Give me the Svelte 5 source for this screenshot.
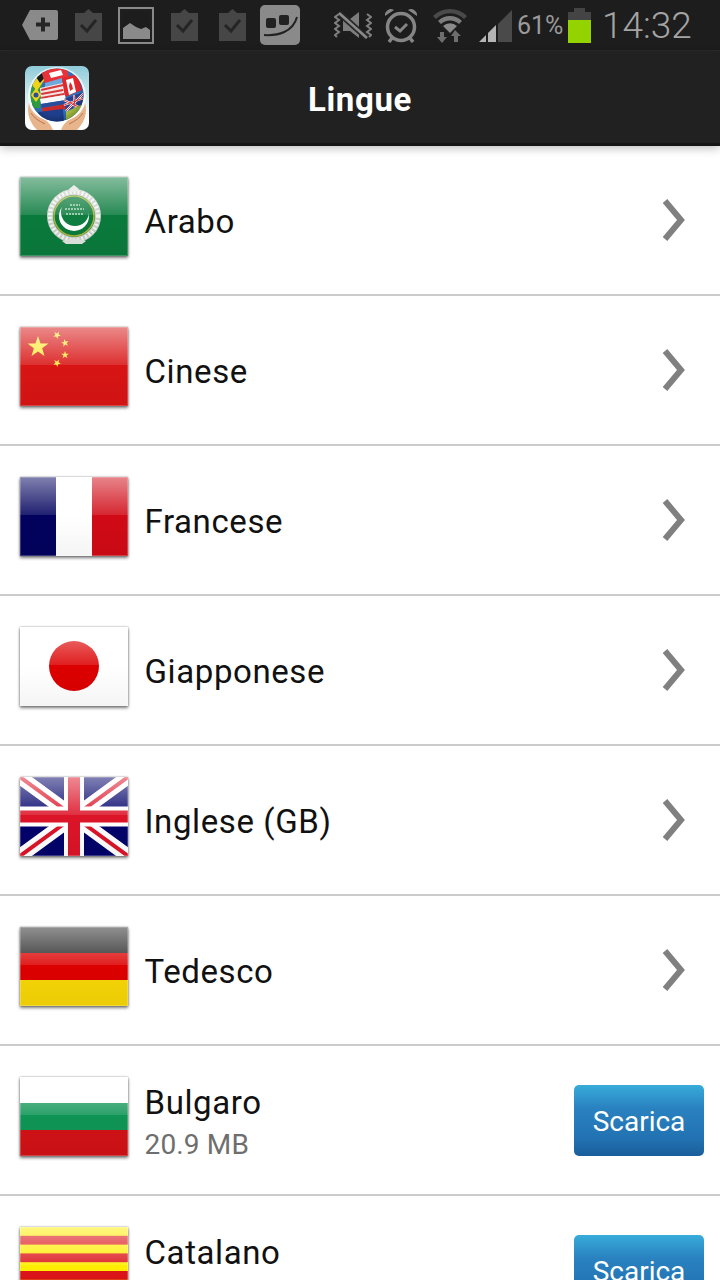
<script>
  const languages = [
    { name: 'Arabo', flag: 'ar' },
    { name: 'Cinese', flag: 'cn' },
    { name: 'Francese', flag: 'fr' },
    { name: 'Giapponese', flag: 'jp' },
    { name: 'Inglese (GB)', flag: 'gb' },
    { name: 'Tedesco', flag: 'de' },
    { name: 'Bulgaro', flag: 'bg', size: '20.9 MB' },
    { name: 'Catalano', flag: 'ca', size: '18.4 MB' }
  ];

  const star = (cx, cy, r, rot = -90) => {
    let pts = [];
    for (let i = 0; i < 10; i++) {
      const rad = i % 2 ? r * 0.4 : r;
      const a = ((rot + i * 36) * Math.PI) / 180;
      pts.push(`${(cx + rad * Math.cos(a)).toFixed(2)},${(cy + rad * Math.sin(a)).toFixed(2)}`);
    }
    return pts.join(' ');
  };

  const catalanRed = [1, 3, 5, 7];
</script>

<div class="screen">
  <div class="status">
    <svg class="i-tag" viewBox="0 0 36 32" width="36" height="32">
      <path d="M8 1h26a2 2 0 0 1 2 2v26a2 2 0 0 1-2 2H8L0 16z" fill="#8a8a8a" />
      <path d="M14 13.500h5v-5h4v5h5v4h-5v5h-4v-5h-5z" fill="#262626" />
    </svg>
    <svg class="i-clip1" viewBox="0 0 27 32" width="27" height="32">
      <path d="M0 4h9l4.500-4 4.500 4h9v28H0z" fill="#464646" />
      <path d="M6 16l6 6 9-11" fill="none" stroke="#252525" stroke-width="3" />
    </svg>
    <svg class="i-pic" viewBox="0 0 36 37" width="36" height="37">
      <rect x="1" y="1" width="34" height="35" fill="none" stroke="#8a8a8a" stroke-width="2" />
      <rect x="3" y="3" width="30" height="31" fill="none" stroke="#222" stroke-width="1" />
      <path d="M5 32V21l7-5 6 4 5 2 5-2 4 3v9z" fill="#8a8a8a" />
    </svg>
    <svg class="i-clip2" viewBox="0 0 27 32" width="27" height="32">
      <path d="M0 4h9l4.500-4 4.500 4h9v28H0z" fill="#464646" />
      <path d="M6 16l6 6 9-11" fill="none" stroke="#252525" stroke-width="3" />
    </svg>
    <svg class="i-clip3" viewBox="0 0 27 32" width="27" height="32">
      <path d="M0 4h9l4.500-4 4.500 4h9v28H0z" fill="#464646" />
      <path d="M6 16l6 6 9-11" fill="none" stroke="#252525" stroke-width="3" />
    </svg>
    <svg class="i-smile" viewBox="0 0 40 40" width="40" height="40">
      <rect width="40" height="40" rx="5" fill="#8a8a8a" />
      <rect x="6" y="13" width="10" height="10" rx="2" fill="#222" />
      <rect x="19" y="10" width="10" height="10" rx="2" fill="#222" />
      <path d="M4 30c14 1 29-3 33-18" fill="none" stroke="#222" stroke-width="2" />
    </svg>
    <svg class="i-mute" viewBox="0 0 38 32" width="38" height="32">
      <path d="M9 10h7l9-7v26l-9-7H9z" fill="#7c7c7c" />
      <path d="M5 4l28 25" stroke="#262626" stroke-width="6" />
      <path d="M5 4l28 25" stroke="#8a8a8a" stroke-width="2.500" />
      <path d="M5 5l-4 3 4 3-4 3 4 3-4 3 4 3-4 3 2 2M33 5l4 3-4 3 4 3-4 3 4 3-4 3 4 3-2 2" fill="none" stroke="#808080" stroke-width="2" />
    </svg>
    <svg class="i-alarm" viewBox="0 0 34 36" width="34" height="36">
      <circle cx="17" cy="20" r="13.500" fill="none" stroke="#858585" stroke-width="3.500" />
      <path d="M1 9a6 6 0 0 1 9-6zM33 9a6 6 0 0 0-9-6z" fill="#858585" />
      <path d="M11 20l5 4 7-7" fill="none" stroke="#858585" stroke-width="3" />
      <path d="M8 31l-3 4M26 31l3 4" stroke="#858585" stroke-width="3.500" />
    </svg>
    <svg class="i-wifi" viewBox="0 0 34 36" width="34" height="36">
      <path d="M0 9a24 24 0 0 1 34 0l-3 3a20 20 0 0 0-28 0z" fill="#4a4a4a" />
      <path d="M5 14a17 17 0 0 1 24 0l-3 3a13 13 0 0 0-18 0z" fill="#7c7c7c" />
      <path d="M10 19a10 10 0 0 1 14 0l-7 7z" fill="#8a8a8a" />
      <path d="M9 36l-5-6h3v-5h4v5h3zM22 23l6 6h-3v6h-4v-6h-3z" fill="#6e6e6e" />
    </svg>
    <svg class="i-signal" viewBox="0 0 33 32" width="33" height="32">
      <path d="M33 0v32H19V14z" fill="#4a4a4a" />
      <path d="M0 32l7-7v7zM9 23l8-8v17H9z" fill="#b4b4b4" />
    </svg>
    <span class="pct">61%</span>
    <svg class="i-batt" viewBox="0 0 23 35" width="23" height="35">
      <path d="M6 0h11v4h6v31H0V4h6z" fill="#444" />
      <rect y="12" width="23" height="23" fill="#93d300" />
    </svg>
    <span class="clock">14:32</span>
  </div>

  <header class="bar">
    <svg class="logo" viewBox="0 0 64 64" width="64" height="64">
      <defs>
        <linearGradient id="logoBg" x1="0" y1="0" x2="0" y2="1">
          <stop offset="0" stop-color="#8fcbd8" />
          <stop offset="0.6" stop-color="#e4f3f5" />
          <stop offset="0.85" stop-color="#fff" />
        </linearGradient>
        <radialGradient id="ball" cx="0.45" cy="0.4" r="0.62">
          <stop offset="0.75" stop-color="#000" stop-opacity="0" />
          <stop offset="1" stop-color="#000" stop-opacity="0.25" />
        </radialGradient>
        <clipPath id="globe"><circle cx="32" cy="29" r="26.500" /></clipPath>
      </defs>
      <rect width="64" height="64" fill="url(#logoBg)" />
      <circle cx="32" cy="30" r="29" fill="#fff" opacity="0.7" />
      <g clip-path="url(#globe)">
        <rect width="64" height="60" fill="#2f6fb5" />
        <path d="M3 18h14l-2 24H5z" fill="#2f9a3f" />
        <path d="M6 29l5-7 5 7-5 7z" fill="#f1d21d" />
        <circle cx="11" cy="29" r="2.500" fill="#2a4d9b" />
        <path d="M7 19l7-10 6 4-8 12z" fill="#f1d21d" />
        <path d="M11 11l6-6 5 4-7 8z" fill="#1a1a1a" />
        <path d="M16 4l26-3 2 11-24 6z" fill="#e8323a" />
        <path d="M24 7l12-3 2 5-12 3z" fill="#fff" />
        <path d="M20 17l17-5 1 8-18 5z" fill="#6fa8dc" />
        <path d="M15 22l23-5 2 13-24 3z" fill="#f6e4e4" />
        <path d="M16 23l22-5 .5 2-22 5zM16 27l22-4 .5 2-22 4zM16 31l23-4 .5 2-23 4z" fill="#d63a3a" />
        <path d="M37 12l16-4 4 16-17 7z" fill="#e4252b" />
        <path d="M41 14l7-2 3 14-7 3z" fill="#fff" />
        <path d="M45 16l2 3 1 4-3 2-1-5z" fill="#e4252b" />
        <path d="M15 33l25-4 1 5-25 4z" fill="#f8f8f8" />
        <path d="M16 38l25-4v4l-24 4z" fill="#2a4d9b" />
        <path d="M17 42l24-4 .5 5-24 4z" fill="#c92a2a" />
        <path d="M13 46l25-3 1 13H18z" fill="#1f3f8e" />
        <path d="M39 33l20-7v12l-18 7z" fill="#2a3f8f" />
        <path d="M39 34l19 9M59 27L41 45M49 29l1 15M39 39l20-7" stroke="#fff" stroke-width="2" />
        <path d="M39 34l19 9M59 27L41 45M49 29l1 15M39 39l20-7" stroke="#d62b2b" stroke-width="0.900" />
        <path d="M41 46l17-8-3 12-14 6z" fill="#a9c23f" />
      </g>
      <circle cx="32" cy="29" r="26.500" fill="url(#ball)" />
      <path d="M4 37c1 7 7 13 14 16 5 2 8 6 10 11H12C5 57 1 47 4 37z" fill="#e8b48c" />
      <path d="M60 37c-1 7-7 13-14 16-5 2-8 6-10 11h16c7-7 11-17 8-27z" fill="#e8b48c" />
      <path d="M6 47c3 5 8 8 14 11M58 47c-3 5-8 8-14 11" fill="none" stroke="#b9764f" stroke-width="1" />
    </svg>
    <h1>Lingue</h1>
  </header>

  <ul class="list">
    {#each languages as lang}
      <li class="row">
        <svg class="flag" viewBox="0 0 108 79" width="108" height="79">
          {#if lang.flag === 'ar'}
            <rect width="108" height="79" fill="#0a7a3c" />
            <circle cx="54" cy="39" r="24" fill="none" stroke="#c8cec8" stroke-width="6" />
            <circle cx="54" cy="39" r="24" fill="none" stroke="#f2f4f2" stroke-width="4" stroke-dasharray="2 2" />
            <circle cx="54" cy="39" r="20" fill="#0c7a3a" stroke="#a4b43c" stroke-width="1.500" />
            <circle cx="54" cy="39" r="15" fill="#fff" />
            <circle cx="55" cy="35" r="14" fill="#0f7d40" />
            <path d="M45 32h19M46 37h17M50 28h10" stroke="#8cc4a0" stroke-width="2" stroke-dasharray="2 1" />
            <path d="M49 12l5-4 5 4-2 3h-6zM42 64l12-3 12 3-4 3H46z" fill="#dfe3df" />
          {:else if lang.flag === 'cn'}
            <rect width="108" height="79" fill="#d81414" />
            <polygon points={star(18, 20, 11)} fill="#ffe93a" />
            <polygon points={star(37, 8, 4, -60)} fill="#ffe93a" />
            <polygon points={star(45, 16, 4, -30)} fill="#ffe93a" />
            <polygon points={star(45, 28, 4, -90)} fill="#ffe93a" />
            <polygon points={star(37, 36, 4, -60)} fill="#ffe93a" />
          {:else if lang.flag === 'fr'}
            <rect width="36" height="79" fill="#02025e" />
            <rect x="36" width="36" height="79" fill="#fff" />
            <rect x="72" width="36" height="79" fill="#d00a16" />
          {:else if lang.flag === 'jp'}
            <rect width="108" height="79" fill="#fff" />
            <circle cx="54" cy="39" r="25" fill="#dc0000" />
          {:else if lang.flag === 'gb'}
            <rect width="108" height="79" fill="#02026a" />
            <path d="M0 0l108 79M108 0L0 79" stroke="#fff" stroke-width="14" />
            <path d="M0 0l54 39.500M54 39.500l54 39.500M108 0L54 39.500M54 39.500L0 79" stroke="#dc1428" stroke-width="4" />
            <path d="M54 0v79M0 39.500h108" stroke="#fff" stroke-width="20" />
            <path d="M54 0v79M0 39.500h108" stroke="#dc1428" stroke-width="12" />
          {:else if lang.flag === 'de'}
            <rect width="108" height="26" fill="#222" />
            <rect y="26" width="108" height="27" fill="#dc0000" />
            <rect y="53" width="108" height="26" fill="#f5d506" />
          {:else if lang.flag === 'bg'}
            <rect width="108" height="26" fill="#fff" />
            <rect y="26" width="108" height="27" fill="#0f9455" />
            <rect y="53" width="108" height="26" fill="#d01216" />
          {:else}
            <rect width="108" height="79" fill="#ffee00" />
            {#each catalanRed as n}
              <rect y={n * 8.800} width="108" height="8.800" fill="#dc1418" />
            {/each}
          {/if}
          <rect width="108" height="38" fill="url(#gloss{lang.flag})" />
          <rect y="38" width="108" height="41" fill="url(#low{lang.flag})" />
          <rect x="0.500" y="0.500" width="107" height="78" fill="none" stroke="#fff" stroke-opacity="0.220" />
          <defs>
            <linearGradient id="gloss{lang.flag}" x1="0" y1="0" x2="0" y2="1">
              <stop offset="0" stop-color="#fff" stop-opacity="0.500" />
              <stop offset="1" stop-color="#fff" stop-opacity="0.120" />
            </linearGradient>
            <linearGradient id="low{lang.flag}" x1="0" y1="0" x2="0" y2="1">
              <stop offset="0" stop-color="#000" stop-opacity="0" />
              <stop offset="1" stop-color="#000" stop-opacity="0.040" />
            </linearGradient>
          </defs>
        </svg>

        <div class="label">
          <div class="name">{lang.name}</div>
          {#if lang.size}
            <div class="size">{lang.size}</div>
          {/if}
        </div>

        {#if lang.size}
          <button class="get">Scarica</button>
        {:else}
          <svg class="chev" viewBox="0 0 28 44" width="28" height="44">
            <path d="M5 3l16 19L5 41" fill="none" stroke="#808080" stroke-width="6" />
          </svg>
        {/if}
      </li>
    {/each}
  </ul>
</div>

<style>
  :global(body) {
    margin: 0;
    background: #fff;
  }
  .screen {
    height: 1280px;
    overflow: hidden;
    font-family: Roboto, "Liberation Sans", sans-serif;
  }
  .status {
    height: 50px;
    display: flex;
    align-items: center;
    padding-left: 22px;
    background: #1d1d1d;
    border-bottom: 1px solid #2b2b2b;
  }
  .status svg {
    flex: none;
  }
  .i-clip1 { margin-left: 17px; }
  .i-pic { margin-left: 16px; }
  .i-clip2 { margin-left: 17px; }
  .i-clip3 { margin-left: 21px; }
  .i-smile { margin-left: 14px; }
  .i-mute { margin-left: 34px; }
  .i-alarm { margin-left: 12px; }
  .i-wifi { margin-left: 15px; }
  .i-signal { margin-left: 12px; margin-top: 2px; }
  .i-batt { margin-left: 5px; }
  .pct {
    margin-left: 5px;
    width: 46px;
    font-size: 25px;
    color: #9a9a9a;
    white-space: nowrap;
    padding-top: 1px;
  }
  .clock {
    margin-left: 11px;
    font-size: 37px;
    font-weight: 300;
    color: #a4a4a4;
    padding-top: 1px;
  }
  .bar {
    position: relative;
    height: 95px;
    box-sizing: border-box;
    display: flex;
    align-items: center;
    justify-content: center;
    padding-top: 4px;
    background: #212121;
    border-bottom: 3px solid #151515;
    box-shadow: 0 2px 9px rgba(0, 0, 0, 0.28);
  }
  .logo {
    position: absolute;
    left: 25px;
    top: 15px;
    border-radius: 7px;
  }
  h1 {
    margin: 0;
    font-size: 33px;
    font-weight: 700;
    letter-spacing: 0.6px;
    color: #fff;
  }
  .list {
    margin: 0;
    padding: 0;
    list-style: none;
  }
  .row {
    height: 150px;
    box-sizing: border-box;
    display: flex;
    align-items: center;
    padding: 0 16px 0 20px;
    background: #fff;
    border-bottom: 2px solid #cbcbcb;
  }
  .flag {
    flex: none;
    align-self: flex-start;
    margin-top: 31px;
    box-shadow: 0 2px 3px rgba(0, 0, 0, 0.5), 0 0 2px rgba(0, 0, 0, 0.35);
  }
  .label {
    flex: 1;
    padding: 3px 0 0 16.500px;
  }
  .name {
    font-size: 33px;
    line-height: 40px;
    letter-spacing: 0.6px;
    color: #111;
  }
  .size {
    margin: 4px 0 -2px;
    font-size: 28px;
    line-height: 36px;
    letter-spacing: 0.15px;
    color: #6e6e6e;
  }
  .chev {
    margin-right: 16px;
  }
  .get {
    width: 130px;
    height: 71px;
    padding: 2px 0 0;
    border: 0;
    border-radius: 5px;
    font: 28px Roboto, "Liberation Sans", sans-serif;
    color: #fff;
    background: linear-gradient(#37acda, #2a82c0 32%, #2272b2 75%, #1a5e9b);
  }
</style>
